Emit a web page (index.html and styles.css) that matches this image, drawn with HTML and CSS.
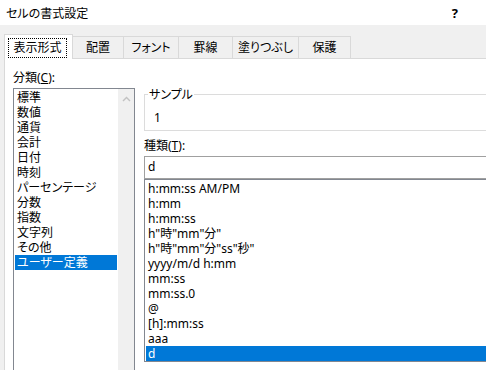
FILE: index.html
```html
<!DOCTYPE html>
<html lang="ja">
<head>
	<meta charset="UTF-8">
	<title>セルの書式設定</title>
	<link rel="stylesheet" href="styles.css">
</head>
<body>
	<div class="titlebar">
		<span>セルの書式設定</span>
		<span class="help">?</span>
	</div>
	<div class="tabs">
		<div class="tab active"><span class="focus">表示形式</span></div>
		<div class="tab">配置</div>
		<div class="tab">フォント</div>
		<div class="tab">罫線</div>
		<div class="tab">塗りつぶし</div>
		<div class="tab">保護</div>
		<div class="tabFill"></div>
	</div>
	<div class="panel">
		<div class="leftCol">
			<div class="label">分類(<u>C</u>):</div>
			<div class="listBox catBox">
				<ul class="items">
					<li>標準</li>
					<li>数値</li>
					<li>通貨</li>
					<li>会計</li>
					<li>日付</li>
					<li>時刻</li>
					<li>パーセンテージ</li>
					<li>分数</li>
					<li>指数</li>
					<li>文字列</li>
					<li>その他</li>
					<li class="sel">ユーザー定義</li>
				</ul>
				<div class="scroll">
					<svg width="9" height="6" viewBox="0 0 9 6"><path d="M1 5 L4.5 1.5 L8 5" fill="none" stroke="#c2c2c2" stroke-width="1.4"/></svg>
				</div>
			</div>
		</div>
		<div class="rightCol">
			<fieldset class="sample">
				<legend>サンプル</legend>
				<div class="sampleVal">1</div>
			</fieldset>
			<div class="label kind">種類(<u>T</u>):</div>
			<div class="input">d</div>
			<div class="listBox fmtBox">
				<ul class="items">
					<li>h:mm:ss AM/PM</li>
					<li>h:mm</li>
					<li>h:mm:ss</li>
					<li>h"時"mm"分"</li>
					<li>h"時"mm"分"ss"秒"</li>
					<li>yyyy/m/d h:mm</li>
					<li>mm:ss</li>
					<li>mm:ss.0</li>
					<li>@</li>
					<li>[h]:mm:ss</li>
					<li>aaa</li>
					<li class="sel">d</li>
				</ul>
			</div>
		</div>
	</div>
</body>
</html>
```

FILE: styles.css
```css
*{
	padding: 0;
	margin: 0;
	box-sizing: border-box;
}
body{
	width: 486px;
	height: 370px;
	overflow: hidden;
	background-color: #f0f0f0;
	font-family: "Noto Sans", "Noto Sans CJK JP", sans-serif;
	font-size: 12px;
	font-feature-settings: "palt";
	color: #000;
}
.titlebar{
	height: 25px;
	background-color: #fff;
	display: flex;
	justify-content: space-between;
	align-items: center;
	padding: 0 28px 0 6px;
}
.help{
	font-weight: bold;
	font-size: 13px;
}
.tabs{
	display: flex;
	align-items: flex-end;
	margin-top: 9px;
	padding-left: 4px;
}
.tab{
	height: 23px;
	line-height: 21px;
	text-align: center;
	border: 1px solid #d9d9d9;
	border-left: none;
	background-color: #f0f0f0;
}
.tab:nth-child(2){ width: 51px; }
.tab:nth-child(3){ width: 55px; }
.tab:nth-child(4){ width: 54px; }
.tab:nth-child(5){ width: 66px; }
.tab:nth-child(6){ width: 52px; }
.tab.active{
	width: 69px;
	height: 25px;
	background-color: #fff;
	border-left: 1px solid #d9d9d9;
	border-bottom: none;
	padding: 3px 0 0 3px;
	text-align: left;
}
.focus{
	display: block;
	width: 59px;
	height: 20px;
	line-height: 18px;
	text-align: center;
	border: 1px dotted #000;
}
.tabFill{
	flex: 1;
	border-bottom: 1px solid #d9d9d9;
}
.panel{
	width: 482px;
	height: 311px;
	margin-left: 4px;
	background-color: #fff;
	border-left: 1px solid #d9d9d9;
	display: flex;
	gap: 9px;
	padding: 11px 0 0 8px;
}
.leftCol{
	width: 122px;
}
.rightCol{
	flex: 1;
	padding-top: 17px;
}
.label{
	height: 15px;
	line-height: 15px;
}
.listBox{
	border: 1px solid #828790;
	margin-top: 3px;
}
.catBox{
	height: 300px;
	display: flex;
}
.items{
	list-style: none;
	flex: 1;
	padding: 1px;
}
.items li{
	height: 15px;
	line-height: 15px;
	padding-left: 2px;
	white-space: nowrap;
}
.items li.sel{
	background-color: #0078d7;
	color: #fff;
}
.scroll{
	width: 16px;
	background-color: #f0f0f0;
	display: flex;
	justify-content: center;
	padding-top: 7px;
}
.sample{
	border: 1px solid #dcdcdc;
	border-right: none;
	padding: 8px 9px 5px;
}
.sample legend{
	margin-left: -6px;
	padding: 0 1px;
	line-height: 15px;
}
.sampleVal{
	height: 15px;
	line-height: 15px;
}
.kind{
	margin-top: 7px;
}
.input{
	height: 23px;
	margin-top: 3px;
	border: 1px solid #a0a0a0;
	border-right: none;
	line-height: 20px;
	padding-left: 3px;
}
.fmtBox{
	margin-top: 0;
	height: 183px;
	border-right: none;
}
.fmtBox .items{
	padding-right: 0;
}
```
